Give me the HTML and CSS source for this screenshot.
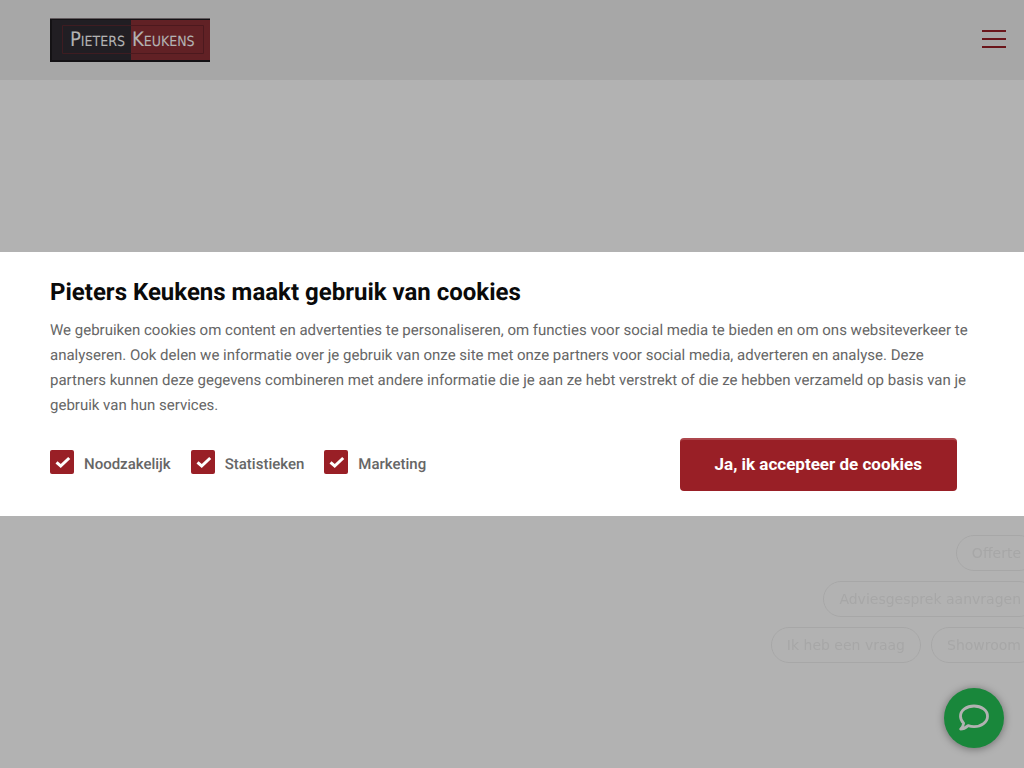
FILE: index.html
```html
<!DOCTYPE html>
<html lang="nl">
<head>
<meta charset="utf-8">
<meta name="viewport" content="width=device-width, initial-scale=1">
<title>Pieters Keukens</title>
<link rel="stylesheet" href="styles.css">
</head>
<body>
<header class="site-header">
  <a class="logo" href="#" aria-label="Pieters Keukens">
    <svg width="160" height="44" viewBox="0 0 160 44">
      <rect width="160" height="44" fill="#1d1a1f"/>
      <rect x="2" y="2" width="79" height="40" fill="#302c33"/>
      <rect x="81" y="2" width="79" height="40" fill="#8c3036"/>
      <rect width="160" height="1" fill="#8a8084"/>
      <path d="M81 7.500H12.500V35.500H81" fill="none" stroke="#5a2930"/>
      <path d="M81 7.500H153.500V35.500H81" fill="none" stroke="#6d242b"/>
      <g class="logo-text">
        <text x="20" y="28"><tspan class="logo-cap">P</tspan>IETERS</text>
        <text x="82" y="28"><tspan class="logo-cap">K</tspan>EUKENS</text>
      </g>
    </svg>
  </a>
  <button class="menu-button" type="button" aria-label="Menu"><span></span><span></span><span></span></button>
</header>

<div class="chat">
  <div class="chips">
    <button class="chip" type="button">Offerte</button>
    <button class="chip" type="button">Adviesgesprek aanvragen</button>
    <button class="chip" type="button">Ik heb een vraag</button>
    <button class="chip" type="button">Showroom</button>
  </div>
</div>
<button class="chat-button" type="button" aria-label="Chat">
  <svg width="30" height="30" viewBox="0 0 30 30" fill="none" stroke="#fff" stroke-width="2.800" stroke-linejoin="round">
    <path d="M4.600 20.300C2.500 18.200 1.500 15.800 1.500 13.300C1.500 7.500 7.500 3 15 3S28.500 7.500 28.500 13.300S22.500 23.600 15 23.600C12.900 23.600 10.900 23.200 9.100 22.600C6.700 24.700 4 26.100 1.600 26.100C3.300 24.300 4.400 22.500 4.600 20.300Z"/>
  </svg>
</button>

<div class="overlay">
  <form class="cookies" role="dialog" aria-labelledby="cookie-title">
    <h2 class="title" id="cookie-title">Pieters Keukens maakt gebruik van cookies</h2>
    <p class="text">We gebruiken cookies om content en advertenties te personaliseren, om functies voor social media te bieden en om ons websiteverkeer te analyseren. Ook delen we informatie over je gebruik van onze site met onze partners voor social media, adverteren en analyse. Deze partners kunnen deze gegevens combineren met andere informatie die je aan ze hebt verstrekt of die ze hebben verzameld op basis van je gebruik van hun services.</p>
    <div class="actions">
      <div class="options">
        <label class="option"><span class="box"><input type="checkbox" checked><svg class="tick" viewBox="0 0 24 24"><path d="M6.500 12.300L10.700 16L19.200 8"/></svg></span>Noodzakelijk</label>
        <label class="option"><span class="box"><input type="checkbox" checked><svg class="tick" viewBox="0 0 24 24"><path d="M6.500 12.300L10.700 16L19.200 8"/></svg></span>Statistieken</label>
        <label class="option"><span class="box"><input type="checkbox" checked><svg class="tick" viewBox="0 0 24 24"><path d="M6.500 12.300L10.700 16L19.200 8"/></svg></span>Marketing</label>
      </div>
      <button class="accept" type="button">Ja, ik accepteer de cookies</button>
    </div>
  </form>
</div>
</body>
</html>
```
FILE: styles.css
```css
* { box-sizing: border-box; }
body {
  margin: 0;
  background: #fff;
  color: #666;
  font-family: Roboto, "Liberation Sans", sans-serif;
  font-size: 15px;
  line-height: 25px;
  text-rendering: geometricPrecision;
  overflow-x: hidden;
}
button { font: inherit; cursor: pointer; }

.site-header {
  display: flex;
  align-items: center;
  justify-content: space-between;
  height: 80px;
  padding: 0 18px 0 50px;
  background: #f0f0f0;
}
.logo, .logo svg { display: block; }
.logo-text {
  fill: #fff;
  font-family: "Liberation Sans Narrow", "DejaVu Sans Condensed", sans-serif;
  font-size: 14px;
}
.logo-cap { font-size: 20px; }
.menu-button {
  display: flex;
  flex-direction: column;
  gap: 6px;
  padding: 0 0 2px;
  border: 0;
  background: none;
}
.menu-button span { width: 24px; height: 2px; background: #991f26; }

.chat {
  position: fixed;
  right: 0;
  bottom: 105px;
  width: 254px;
}
.chips {
  display: flex;
  flex-wrap: wrap;
  justify-content: flex-end;
  gap: 10px;
  margin-right: -13px;
}
.chip {
  height: 36px;
  padding: 0 15px;
  border: 1px solid #f0f0f0;
  border-radius: 18px;
  background: none;
  color: #f0f0f0;
  font-family: "DejaVu Sans", sans-serif;
  font-size: 14px;
  white-space: nowrap;
}
.chat-button {
  position: fixed;
  right: 20px;
  bottom: 20px;
  display: grid;
  place-items: center;
  width: 60px;
  height: 60px;
  padding: 0;
  border: 0;
  border-radius: 50%;
  background: #24c255;
  box-shadow: 0 1px 8px rgba(0, 0, 0, 0.4);
}

.overlay {
  position: fixed;
  inset: 0;
  display: flex;
  align-items: center;
  background: rgba(0, 0, 0, 0.3);
}
.cookies {
  width: 100%;
  padding: 25px 50px;
  background: #fff;
}
.title {
  margin: 0 0 11px;
  color: #0a0a0a;
  font-size: 24px;
  line-height: 30px;
  font-weight: 700;
}
.text { margin: 0 0 20px; }
.actions {
  display: flex;
  align-items: center;
  justify-content: space-between;
  padding-right: 17px;
}
.options { display: flex; gap: 20px; }
.option {
  display: flex;
  align-items: flex-start;
  gap: 10px;
  font-weight: 500;
}
.box { display: grid; width: 24px; height: 24px; margin-top: -2px; }
.box input, .tick { grid-area: 1 / 1; width: 24px; height: 24px; margin: 0; }
.box input {
  appearance: none;
  border-radius: 2px;
  background: #991f26;
}
.tick { fill: none; stroke: none; stroke-width: 3; pointer-events: none; z-index: 1; }
.box input:checked + .tick { stroke: #fff; }
.accept {
  height: 53px;
  padding: 0 35px 2px;
  border: 0 solid #ad474d;
  border-top-width: 2px;
  border-radius: 4px;
  background: #991f26;
  color: #fff;
  font-size: 17px;
  font-weight: 700;
}
```
